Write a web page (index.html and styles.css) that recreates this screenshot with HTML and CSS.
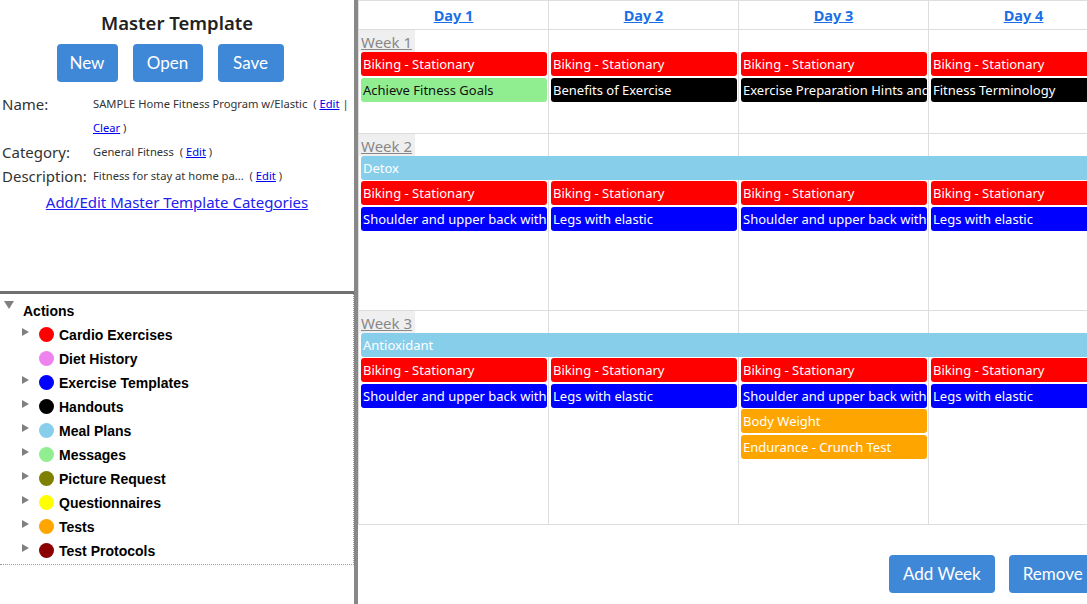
FILE: index.html
```html
<!DOCTYPE html>
<html>
    <head>
        <meta http-equiv="Content-Type" content="text/html; charset=UTF-8">
        <title>Master Template</title>
        <link rel="stylesheet" href="styles.css">
    </head>
    <body>
        <div class="app">
            <aside class="side">
                <section class="template">
                    <h2>Master Template</h2>
                    <div class="tpl-buttons">
                        <span class="btn">New</span>
                        <span class="btn">Open</span>
                        <span class="btn">Save</span>
                    </div>
                    <div class="info">
                        <span class="info-label">Name:</span>
                        <span class="info-value">SAMPLE Home Fitness Program w/Elastic &nbsp;( <a href="#">Edit</a> | <a href="#">Clear</a> )</span>
                        <span class="info-label">Category:</span>
                        <span class="info-value">General Fitness &nbsp;( <a href="#">Edit</a> )</span>
                        <span class="info-label">Description:</span>
                        <span class="info-value">Fitness for stay at home pa... &nbsp;( <a href="#">Edit</a> )</span>
                    </div>
                    <a class="cat-link" href="#">Add/Edit Master Template Categories</a>
                </section>
                <div class="split-h"></div>
                <section class="tree">
                    <div class="tree-root"><span class="tw open"></span>Actions</div>
                    <ul>
                        <li><span class="tw"></span><i class="dot" style="background:#ff0000"></i>Cardio Exercises</li>
                        <li><span class="tw none"></span><i class="dot" style="background:#ee82ee"></i>Diet History</li>
                        <li><span class="tw"></span><i class="dot" style="background:#0000ff"></i>Exercise Templates</li>
                        <li><span class="tw"></span><i class="dot" style="background:#000000"></i>Handouts</li>
                        <li><span class="tw"></span><i class="dot" style="background:#87ceeb"></i>Meal Plans</li>
                        <li><span class="tw"></span><i class="dot" style="background:#90ee90"></i>Messages</li>
                        <li><span class="tw"></span><i class="dot" style="background:#808000"></i>Picture Request</li>
                        <li><span class="tw"></span><i class="dot" style="background:#ffff00"></i>Questionnaires</li>
                        <li><span class="tw"></span><i class="dot" style="background:#ffa500"></i>Tests</li>
                        <li><span class="tw"></span><i class="dot" style="background:#8b0000"></i>Test Protocols</li>
                    </ul>
                </section>
            </aside>
            <div class="split-v"></div>
            <main class="planner">
                <div class="cal">
                    <div class="cal-head">
                        <div class="day-h"><a href="#">Day 1</a></div>
                        <div class="day-h"><a href="#">Day 2</a></div>
                        <div class="day-h"><a href="#">Day 3</a></div>
                        <div class="day-h"><a href="#">Day 4</a></div>
                        <div class="day-h"><a href="#">Day 5</a></div>
                    </div>
                    <div class="week wk-1">
                        <div class="day">
                            <div class="ev red">Biking - Stationary</div>
                            <div class="ev green">Achieve Fitness Goals</div>
                        </div>
                        <div class="day">
                            <div class="ev red">Biking - Stationary</div>
                            <div class="ev black">Benefits of Exercise</div>
                        </div>
                        <div class="day">
                            <div class="ev red">Biking - Stationary</div>
                            <div class="ev black">Exercise Preparation Hints and Tips</div>
                        </div>
                        <div class="day">
                            <div class="ev red">Biking - Stationary</div>
                            <div class="ev black">Fitness Terminology</div>
                        </div>
                        <div class="day">
                            <div class="ev red">Biking - Stationary</div>
                        </div>
                        <a class="week-label" href="#">Week 1</a>
                    </div>
                    <div class="week wk-2 has-span">
                        <div class="day">
                            <div class="ev red">Biking - Stationary</div>
                            <div class="ev blue">Shoulder and upper back with elastic</div>
                        </div>
                        <div class="day">
                            <div class="ev red">Biking - Stationary</div>
                            <div class="ev blue">Legs with elastic</div>
                        </div>
                        <div class="day">
                            <div class="ev red">Biking - Stationary</div>
                            <div class="ev blue">Shoulder and upper back with elastic</div>
                        </div>
                        <div class="day">
                            <div class="ev red">Biking - Stationary</div>
                            <div class="ev blue">Legs with elastic</div>
                        </div>
                        <div class="day">
                            <div class="ev red">Biking - Stationary</div>
                        </div>
                        <a class="week-label" href="#">Week 2</a>
                        <div class="span-bar">Detox</div>
                    </div>
                    <div class="week wk-3 has-span">
                        <div class="day">
                            <div class="ev red">Biking - Stationary</div>
                            <div class="ev blue">Shoulder and upper back with elastic</div>
                        </div>
                        <div class="day">
                            <div class="ev red">Biking - Stationary</div>
                            <div class="ev blue">Legs with elastic</div>
                        </div>
                        <div class="day">
                            <div class="ev red">Biking - Stationary</div>
                            <div class="ev blue">Shoulder and upper back with elastic</div>
                            <div class="ev orange">Body Weight</div>
                            <div class="ev orange">Endurance - Crunch Test</div>
                        </div>
                        <div class="day">
                            <div class="ev red">Biking - Stationary</div>
                            <div class="ev blue">Legs with elastic</div>
                        </div>
                        <div class="day">
                            <div class="ev red">Biking - Stationary</div>
                        </div>
                        <a class="week-label" href="#">Week 3</a>
                        <div class="span-bar">Antioxidant</div>
                    </div>
                </div>
                <div class="cal-actions">
                    <span class="btn">Add Week</span>
                    <span class="btn">Remove Week</span>
                </div>
            </main>
        </div>
    </body>
</html>
```
FILE: styles.css
```css
html, body {
    margin: 0;
    padding: 0;
    overflow: hidden;
}
body {
    font-family: "Noto Sans", "Open Sans", sans-serif;
    color: #222;
    background: #fff;
}
.app {
    display: flex;
    height: 604px;
}

/* left side */
.side {
    width: 354px;
    flex: none;
    display: flex;
    flex-direction: column;
}
.template {
    height: 291px;
    box-sizing: border-box;
    padding-top: 10px;
    text-align: center;
}
.template h2 {
    margin: 0;
    font-size: 18.5px;
    font-weight: 600;
    line-height: 26px;
    color: #222;
}
.btn {
    display: inline-block;
    font-family: Lato, "Open Sans", sans-serif;
    font-size: 17px;
    color: #fff;
    background: #3f88d8;
    border-radius: 4px;
    height: 38px;
    line-height: 38px;
    cursor: pointer;
    text-align: center;
}
.tpl-buttons {
    display: flex;
    justify-content: center;
    gap: 15px;
    padding-right: 14px;
    margin-top: 8px;
}
.tpl-buttons .btn:nth-child(1) { width: 61px; }
.tpl-buttons .btn:nth-child(2) { width: 70px; }
.tpl-buttons .btn:nth-child(3) { width: 66px; }
.info {
    display: grid;
    grid-template-columns: 91px 1fr;
    text-align: left;
    padding-left: 2px;
    margin-top: 10px;
    line-height: 24px;
}
.info-label {
    font-size: 15px;
    color: #333;
}
.info-value {
    font-size: 11.2px;
    color: #333;
}
.info a {
    color: #0000ee;
}
.cat-link {
    display: inline-block;
    margin-top: 4px;
    font-size: 15px;
    color: #2222ee;
}
.split-h {
    height: 3px;
    background: #707070;
}
.tree {
    height: 271px;
    box-sizing: border-box;
    border-right: 1px dotted #999;
    border-bottom: 1px dotted #999;
    padding-top: 5px;
    font-family: "Liberation Sans", Arial, sans-serif;
    font-weight: bold;
    font-size: 14px;
    color: #000;
}
.tree-root {
    display: flex;
    align-items: center;
    height: 24px;
    padding-left: 4px;
}
.tree ul {
    list-style-type: none;
    margin: 0;
    padding: 0 0 0 22px;
}
.tree li {
    display: flex;
    align-items: center;
    height: 24px;
}
.tw {
    width: 0;
    height: 0;
    border-top: 4.5px solid transparent;
    border-bottom: 4.5px solid transparent;
    border-left: 7px solid #808080;
    margin: -6px 10px 0 0;
}
.tw.none {
    border-left-color: transparent;
}
.tw.open {
    border-left: 5px solid transparent;
    border-right: 5px solid transparent;
    border-top: 8px solid #808080;
    border-bottom: 0;
    margin: -12px 9px 0 0;
}
.dot {
    display: inline-block;
    width: 15px;
    height: 15px;
    border-radius: 50%;
    margin: -2px 5px 0 0;
}
.split-v {
    width: 4px;
    flex: none;
    background: #888;
}

/* planner */
.planner {
    flex: 1;
    overflow: hidden;
}
.cal {
    width: 951px;
    border-left: 1px solid #ddd;
}
.cal-head {
    display: flex;
    height: 28px;
    border-top: 1px solid #ddd;
    border-bottom: 1px solid #ddd;
}
.day-h {
    width: 189px;
    flex: none;
    border-right: 1px solid #ddd;
    text-align: center;
    line-height: 28px;
}
.day-h a {
    font-weight: bold;
    font-size: 14.5px;
    color: #1a6fe6;
}
.week {
    display: grid;
    grid-template-columns: repeat(5, 190px);
    border-bottom: 1px solid #ddd;
}
.wk-1 { height: 103px; }
.wk-2 { height: 176px; }
.wk-3 { height: 213px; }
.day {
    grid-row: 1;
    border-right: 1px solid #ddd;
    padding: 22px 1px 0 2px;
    min-width: 0;
}
.week .day:nth-child(1) { grid-column: 1; }
.week .day:nth-child(2) { grid-column: 2; }
.week .day:nth-child(3) { grid-column: 3; }
.week .day:nth-child(4) { grid-column: 4; }
.week .day:nth-child(5) { grid-column: 5; }
.has-span .day {
    padding-top: 47px;
}
.week-label {
    grid-row: 1;
    grid-column: 1;
    align-self: start;
    justify-self: start;
    background: #efefef;
    color: #888;
    font-size: 15px;
    line-height: 19px;
    padding: 3px 3px 0 2px;
}
.span-bar {
    grid-row: 1;
    grid-column: 1 / -1;
    align-self: start;
    margin: 22px 0 0 2px;
    height: 24px;
    line-height: 24px;
    background: #87ceeb;
    color: #fff;
    font-size: 13px;
    padding-left: 2px;
    border-radius: 3px 0 0 3px;
}
.ev {
    height: 24px;
    line-height: 25px;
    margin-bottom: 1.5px;
    padding-left: 2px;
    border-radius: 3px;
    font-size: 13px;
    color: #fff;
    white-space: nowrap;
    overflow: hidden;
}
.ev.red { background: #ff0000; }
.ev.green { background: #90ee90; color: #111; }
.ev.black { background: #000; }
.ev.blue { background: #0000ff; }
.ev.orange { background: #ffa500; }
.cal-actions {
    display: flex;
    gap: 14px;
    padding: 30px 0 0 531px;
}
.cal-actions .btn {
    flex: none;
    padding: 0 14px;
    height: 38px;
}
```
